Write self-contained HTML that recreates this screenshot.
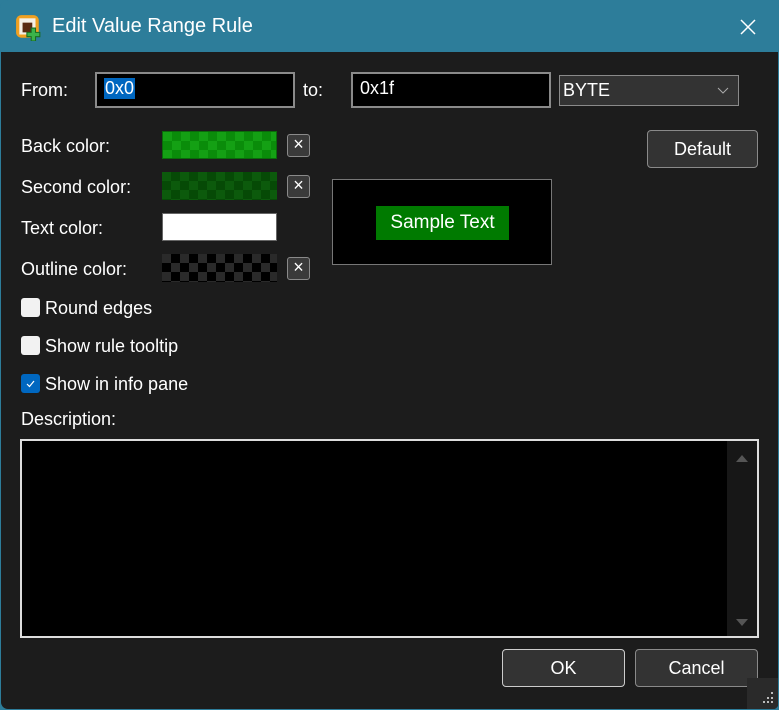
<!DOCTYPE html>
<html><head><meta charset="utf-8"><style>
*{box-sizing:border-box;margin:0;padding:0}
body{width:779px;height:710px;background:#2d7d9a;font-family:"Segoe UI","Liberation Sans",sans-serif;color:#fff;font-size:18px;overflow:hidden;position:relative}
.win{position:absolute;left:0;top:0;width:779px;height:710px;border-radius:8px;background:#2d7d9a;overflow:hidden}
.body{position:absolute;left:1px;top:52px;right:1px;bottom:1px;background:#1c1c1c;border-radius:0 0 7px 7px}
.t{position:absolute;white-space:nowrap}
.inp{position:absolute;background:#000;border:2px solid #8a8a8a}
.sw{position:absolute;left:162px;width:115px;height:28px}
.x{position:absolute;left:287px;width:23px;height:23px;border:1px solid #8a8a8a;border-radius:3px;background:#3a3a3a;font-size:18px;line-height:19px;text-align:center}
.btn{position:absolute;background:#333;border:1px solid #8a8a8a;border-radius:4px;text-align:center;font-size:18px}
.cb{position:absolute;left:21px;width:19px;height:19px;border-radius:3px;background:#f2f2f2}
</style></head><body><div class="win">
<svg style="position:absolute;left:15px;top:14px" width="27" height="27" viewBox="0 0 25 25"><rect x="1" y="1" width="21" height="21" rx="5" fill="#f0a020"/><rect x="4" y="4" width="15" height="15" fill="#f5f0e6"/><rect x="7" y="8" width="9" height="9" fill="#5a2a10"/><path d="M15 13h4v4h4v4h-4v4h-4v-4h-4v-4h4z" fill="#3bb34a" stroke="#1a6b20" stroke-width="1"/></svg>
<div class="t" style="left:52px;top:15px;font-size:20px">Edit Value Range Rule</div>
<svg style="position:absolute;left:739px;top:18px" width="18" height="18"><path d="M2 2L16 16M16 2L2 16" stroke="#fff" stroke-width="1.5"/></svg>
<div class="body"></div>
<div class="t" style="left:21px;top:80px">From:</div>
<div class="inp" style="left:95px;top:72px;width:200px;height:36px"><span style="position:absolute;left:7px;top:4px;background:#0067c0;padding:0 1px">0x0</span></div>
<div class="t" style="left:303px;top:80px">to:</div>
<div class="inp" style="left:351px;top:72px;width:200px;height:36px"><span style="position:absolute;left:7px;top:4px">0x1f</span></div>
<div style="position:absolute;left:559px;top:75px;width:180px;height:31px;background:#333;border:1px solid #8a8a8a"><span style="position:absolute;left:3px;top:4px">BYTE</span><svg style="position:absolute;left:157px;top:11px" width="12" height="8"><path d="M1 1l5 5 5-5" stroke="#aaa" fill="none"/></svg></div>
<div class="btn" style="left:647px;top:130px;width:111px;height:38px;line-height:36px">Default</div>
<div class="t" style="left:21px;top:136px">Back color:</div>
<div class="t" style="left:21px;top:177px">Second color:</div>
<div class="t" style="left:21px;top:218px">Text color:</div>
<div class="t" style="left:21px;top:259px">Outline color:</div>
<div class="sw" style="top:131px;background:repeating-conic-gradient(#0a8c0a 0 25%,#14a014 0 50%) 0 0/18px 18px;border:1px solid #0a6a0a"></div>
<div class="sw" style="top:172px;background:repeating-conic-gradient(#064a06 0 25%,#0c5a0c 0 50%) 0 0/18px 18px"></div>
<div class="sw" style="top:213px;background:#fff;border:1px solid #666"></div>
<div class="sw" style="top:254px;background:repeating-conic-gradient(#000 0 25%,#2a2a2a 0 50%) 0 0/18px 18px"></div>
<div class="x" style="top:134px">×</div>
<div class="x" style="top:175px">×</div>
<div class="x" style="top:257px">×</div>
<div style="position:absolute;left:332px;top:179px;width:220px;height:86px;background:#000;border:1px solid #777"></div>
<div class="t" style="left:376px;top:206px;width:133px;height:34px;background:#007a00;line-height:34px;text-align:center;font-size:19px">Sample Text</div>
<div class="cb" style="top:298px"></div><div class="t" style="left:45px;top:298px">Round edges</div>
<div class="cb" style="top:336px"></div><div class="t" style="left:45px;top:336px">Show rule tooltip</div>
<div class="cb" style="top:374px;background:#0067c0"><svg width="19" height="19"><path d="M6 10l2.5 2.5L13 7" stroke="#fff" fill="none" stroke-width="1.2"/></svg></div><div class="t" style="left:45px;top:374px">Show in info pane</div>
<div class="t" style="left:21px;top:409px">Description:</div>
<div style="position:absolute;left:20px;top:439px;width:739px;height:199px;background:#000;border:2px solid #ddd"><div style="position:absolute;right:0;top:0;width:30px;height:195px;background:#171717"></div>
<svg style="position:absolute;right:9px;top:13px" width="12" height="8"><path d="M0 8L6 1L12 8z" fill="#555"/></svg>
<svg style="position:absolute;right:9px;top:178px" width="12" height="8"><path d="M0 0L6 7L12 0z" fill="#555"/></svg></div>
<div class="btn" style="left:502px;top:649px;width:123px;height:38px;line-height:36px;border-color:#ccc">OK</div>
<div class="btn" style="left:635px;top:649px;width:123px;height:38px;line-height:36px">Cancel</div>
<div style="position:absolute;left:747px;top:678px;width:31px;height:31px;background:#2a2a2a"></div>
<svg style="position:absolute;left:762px;top:692px" width="14" height="14" fill="#bbb"><rect x="9" y="0" width="2" height="2"/><rect x="5" y="5" width="2" height="2"/><rect x="9" y="5" width="2" height="2"/><rect x="1" y="9" width="2" height="2"/><rect x="5" y="9" width="2" height="2"/><rect x="9" y="9" width="2" height="2"/></svg>
</div></body></html>
